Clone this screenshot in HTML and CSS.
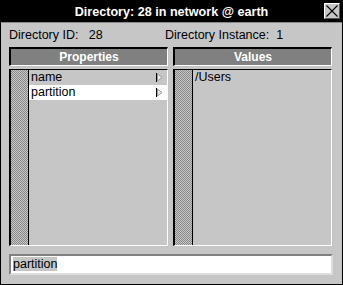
FILE: index.html
```html
<!DOCTYPE html>
<html lang="en">
<head>
    <meta charset="UTF-8">
    <title>Directory</title>
    <link rel="stylesheet" href="styles.css">
</head>
<body>
    <div class="window">
        <div class="titlebar">
            <span class="title">Directory: 28 in network @ earth</span>
            <span class="close">
                <svg width="12" height="12" viewBox="0 0 12 12"><path d="M0.5 0.5L11.5 11.5M11.5 0.5L0.5 11.5" stroke="#000" stroke-width="1.1"/></svg>
            </span>
        </div>
        <div class="content">
            <div class="info">
                <span class="info-id">Directory ID:&nbsp;&nbsp;&nbsp;28</span>
                <span class="info-inst">Directory Instance:&nbsp;&nbsp;1</span>
            </div>
            <div class="columns">
                <div class="column">
                    <div class="col-head">Properties</div>
                    <div class="list">
                        <div class="gutter"></div>
                        <div class="items">
                            <div class="item">name <svg class="arrow" width="7" height="9" viewBox="0 0 7 9"><path d="M1.5 1L6 4.5L1.5 8Z" fill="#eee" stroke="#999"/><path d="M0.5 0V9" stroke="#000"/></svg></div>
                            <div class="item selected">partition <svg class="arrow" width="7" height="9" viewBox="0 0 7 9"><path d="M1.5 1L6 4.5L1.5 8Z" fill="#eee" stroke="#999"/><path d="M0.5 0V9" stroke="#000"/></svg></div>
                        </div>
                    </div>
                </div>
                <div class="column">
                    <div class="col-head">Values</div>
                    <div class="list">
                        <div class="gutter"></div>
                        <div class="items">
                            <div class="item">/Users</div>
                        </div>
                    </div>
                </div>
            </div>
            <div class="field"><span class="sel">partition</span></div>
        </div>
    </div>
</body>
</html>
```

FILE: styles.css
```css
body { margin: 0; background-color: #c6c6c6; font-family: "Liberation Sans", Arial, sans-serif; }
.window { width: 343px; height: 285px; box-sizing: border-box; border: 1px solid #000; background-color: #c6c6c6; display: flex; flex-direction: column; }
.titlebar { height: 21px; background-color: #000; color: #fff; display: flex; align-items: center; justify-content: center; position: relative; border-bottom: 1px solid #888; }
.title { font-weight: bold; font-size: 12.6px; }
.close { position: absolute; right: 2px; top: 2px; width: 16px; height: 16px; background-color: #c6c6c6; border-top: 1px solid #fff; border-left: 1px solid #fff; border-right: 1px solid #555; border-bottom: 1px solid #555; box-sizing: border-box; display: flex; align-items: center; justify-content: center; }
.content { padding: 0 9px 0 8px; flex: 1; display: flex; flex-direction: column; }
.info { font-size: 12.5px; height: 24px; line-height: 25px; display: flex; }
.info-id { width: 156px; }
.columns { display: flex; gap: 5px; }
.column { width: 159px; display: flex; flex-direction: column; }
.col-head { height: 16px; background-color: #808080; color: #fff; font-weight: bold; font-size: 12px; text-align: center; line-height: 16px; border-top: 2px solid #000; border-left: 2px solid #000; border-right: 1px solid #fff; border-bottom: 1px solid #fff; }
.list { margin-top: 3px; height: 177px; box-sizing: border-box; border-top: 1px solid #000; border-left: 2px solid #000; border-right: 1px solid #fff; border-bottom: 1px solid #fff; display: flex; }
.gutter { width: 17px; border-right: 1px solid #000; background: repeating-conic-gradient(#8a8a8a 0 25%, #c6c6c6 0 50%) 0 0 / 2px 2px; }
.items { flex: 1; }
.item { font-size: 12.5px; height: 15px; line-height: 15px; padding-left: 2px; position: relative; }
.item.selected { background-color: #fff; }
.arrow { position: absolute; right: 4px; top: 3px; }
.field { margin-top: 8px; height: 21px; box-sizing: border-box; background-color: #fff; border-top: 2px solid #808080; border-left: 2px solid #808080; border-right: 2px solid #ddd; border-bottom: 2px solid #ddd; font-size: 12.5px; line-height: 17px; padding-left: 2px; }
.sel { background-color: #c6c6c6; }
```
